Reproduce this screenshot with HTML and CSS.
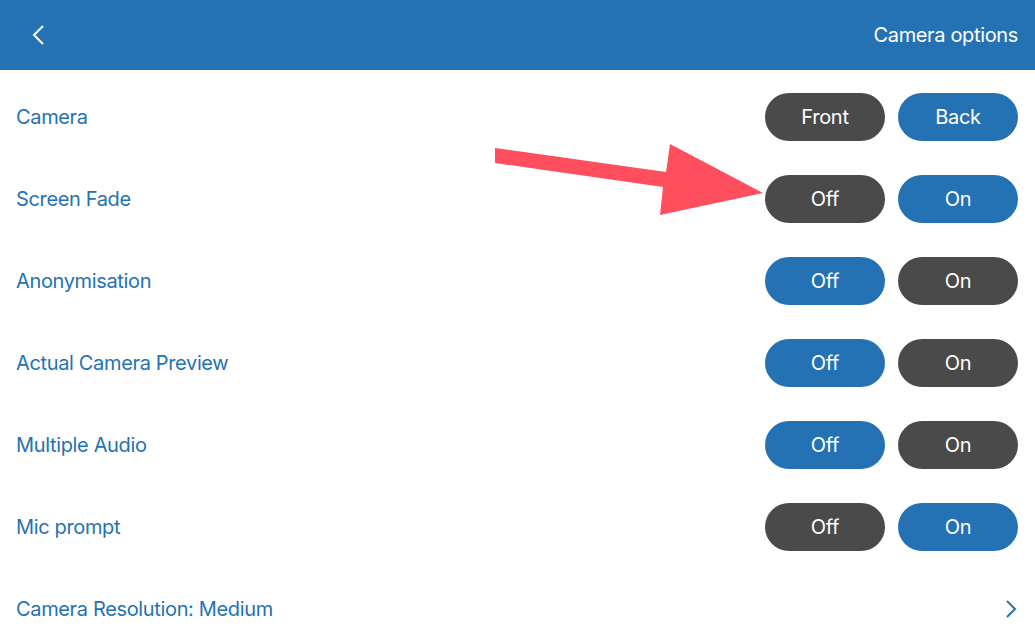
FILE: index.html
```html
<!DOCTYPE html>
<html>
<head>
<meta charset="utf-8">
<link rel="stylesheet" href="styles.css">
</head>
<body>
<header class="bar">
  <svg class="back" width="14" height="20" viewBox="0 0 14 20"><path d="M11 1 L2 10 L11 19" fill="none" stroke="#fff" stroke-width="2"/></svg>
  <div class="title">Camera options</div>
</header>
<main class="list">
  <div class="row"><span class="label">Camera</span><div class="seg"><span class="btn dark">Front</span><span class="btn blue">Back</span></div></div>
  <div class="row"><span class="label">Screen Fade</span><div class="seg"><span class="btn dark">Off</span><span class="btn blue">On</span></div></div>
  <div class="row"><span class="label">Anonymisation</span><div class="seg"><span class="btn blue">Off</span><span class="btn dark">On</span></div></div>
  <div class="row"><span class="label">Actual Camera Preview</span><div class="seg"><span class="btn blue">Off</span><span class="btn dark">On</span></div></div>
  <div class="row"><span class="label">Multiple Audio</span><div class="seg"><span class="btn blue">Off</span><span class="btn dark">On</span></div></div>
  <div class="row"><span class="label">Mic prompt</span><div class="seg"><span class="btn dark">Off</span><span class="btn blue">On</span></div></div>
  <div class="row"><span class="label">Camera Resolution: Medium</span>
    <svg class="chev" width="12" height="18" viewBox="0 0 12 18"><path d="M2 1 L10 9 L2 17" fill="none" stroke="#2472b4" stroke-width="2"/></svg>
  </div>
</main>
<svg class="arrow" width="1035" height="643" viewBox="0 0 1035 643">
  <polygon points="495,148 666,172 670,144 763,193 660,215 663,187 495,163" fill="#ff4f5f"/>
</svg>
</body>
</html>
```
FILE: styles.css
```css
html, body {
  margin: 0;
  padding: 0;
  background: #fff;
  font-family: Inter, "Noto Sans", sans-serif;
  overflow: hidden;
  width: 1035px;
  height: 643px;
}
.bar {
  height: 70px;
  background: #2472b4;
  display: flex;
  align-items: center;
  justify-content: space-between;
  padding: 0 17px 0 32px;
  box-sizing: border-box;
}
.back { display: block; }
.title {
  color: #fff;
  font-size: 20px;
  letter-spacing: -0.35px;
}
.list {
  padding-top: 6px;
}
.row {
  height: 82px;
  display: flex;
  align-items: center;
  justify-content: space-between;
  padding: 0 17px 0 16px;
}
.label {
  color: #2472b4;
  font-size: 20px;
  letter-spacing: -0.35px;
}
.seg {
  display: flex;
  gap: 13px;
}
.btn {
  width: 120px;
  height: 48px;
  border-radius: 24px;
  display: flex;
  align-items: center;
  justify-content: center;
  color: #fff;
  font-size: 20px;
  letter-spacing: -0.3px;
}
.dark { background: #4a4a4a; }
.blue { background: #2472b4; }
.chev { display: block; margin-right: 1px; }
.arrow {
  position: absolute;
  left: 0;
  top: 0;
  pointer-events: none;
}
```
